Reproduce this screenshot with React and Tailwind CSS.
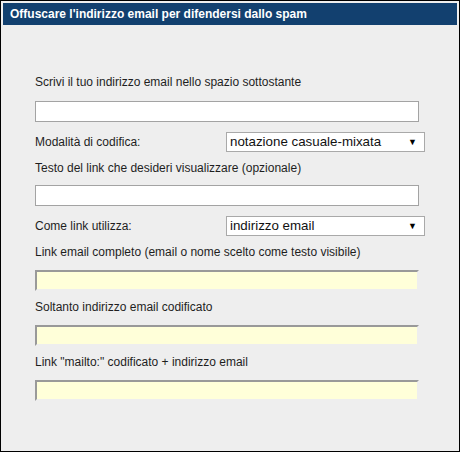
import React, { useState } from "react";

// opzioni dei due menu a tendina
const MODALITA = ["notazione casuale-mixata", "notazione decimale", "notazione esadecimale"];
const LINK_TIPO = ["indirizzo email", "testo del link"];

function Label({ children, className = "" }) {
  return (
    <div className={"h-[16px] text-[12px] leading-[16px] text-[#1e1e1e] " + className}>
      {children}
    </div>
  );
}

function TextBox({ className = "", value, onChange }) {
  return (
    <input
      type="text"
      value={value}
      onChange={onChange}
      className={
        "block h-[21px] w-[384px] border border-[#a3a3a3] bg-white px-[3px] text-[13px] outline-none " +
        className
      }
    />
  );
}

function CodeBox({ className = "" }) {
  return (
    <input
      type="text"
      readOnly
      className={
        "block h-[21px] w-[384px] border-2 border-t-[#999999] border-l-[#999999] border-r-[#eeeeee] border-b-[#eeeeee] bg-[#ffffd9] px-[2px] text-[13px] outline-none " +
        className
      }
    />
  );
}

function Select({ options, value, onChange }) {
  return (
    <div className="relative h-[20px] w-[199px]">
      <select
        value={value}
        onChange={onChange}
        className="block h-[20px] w-[199px] appearance-none border border-[#a9a9a9] bg-white pl-[3px] text-[13.33px] leading-[18px] text-[#111] outline-none"
      >
        {options.map((o) => (
          <option key={o}>{o}</option>
        ))}
      </select>
      <span className="pointer-events-none absolute right-[8px] top-[3px] text-[9px] leading-[14px] text-black">
        ▼
      </span>
    </div>
  );
}

export default function App() {
  const [email, setEmail] = useState("");
  const [testo, setTesto] = useState("");
  const [modalita, setModalita] = useState(MODALITA[0]);
  const [tipo, setTipo] = useState(LINK_TIPO[0]);

  return (
    <div className="h-[452px] w-[460px] border border-black bg-[#eeeeee] p-[2px] font-['Liberation_Sans',Arial,sans-serif]">
      {/* titolo */}
      <div className="flex h-[22px] items-center bg-[#12406f] pl-[7px] text-[12px] font-bold text-white">
        Offuscare l'indirizzo email per difendersi dallo spam
      </div>

      <div className="pl-[32px]">
        <Label className="mt-[49px]">
          Scrivi il tuo indirizzo email nello spazio sottostante
        </Label>
        <TextBox
          className="mt-[11px]"
          value={email}
          onChange={(e) => setEmail(e.target.value)}
        />

        <div className="mt-[10px] flex h-[20px] w-[390px] items-center justify-between">
          <Label>Modalità di codifica:</Label>
          <Select
            options={MODALITA}
            value={modalita}
            onChange={(e) => setModalita(e.target.value)}
          />
        </div>

        <Label className="mt-[8px]">
          Testo del link che desideri visualizzare (opzionale)
        </Label>
        <TextBox
          className="mt-[9px]"
          value={testo}
          onChange={(e) => setTesto(e.target.value)}
        />

        <div className="mt-[10px] flex h-[20px] w-[390px] items-center justify-between">
          <Label>Come link utilizza:</Label>
          <Select
            options={LINK_TIPO}
            value={tipo}
            onChange={(e) => setTipo(e.target.value)}
          />
        </div>

        <Label className="mt-[8px]">
          Link email completo (email o nome scelto come testo visibile)
        </Label>
        <CodeBox className="mt-[10px]" />

        <Label className="mt-[8px]">Soltanto indirizzo email codificato</Label>
        <CodeBox className="mt-[10px]" />

        <Label className="mt-[8px]">
          Link "mailto:" codificato + indirizzo email
        </Label>
        <CodeBox className="mt-[10px]" />
      </div>
    </div>
  );
}
